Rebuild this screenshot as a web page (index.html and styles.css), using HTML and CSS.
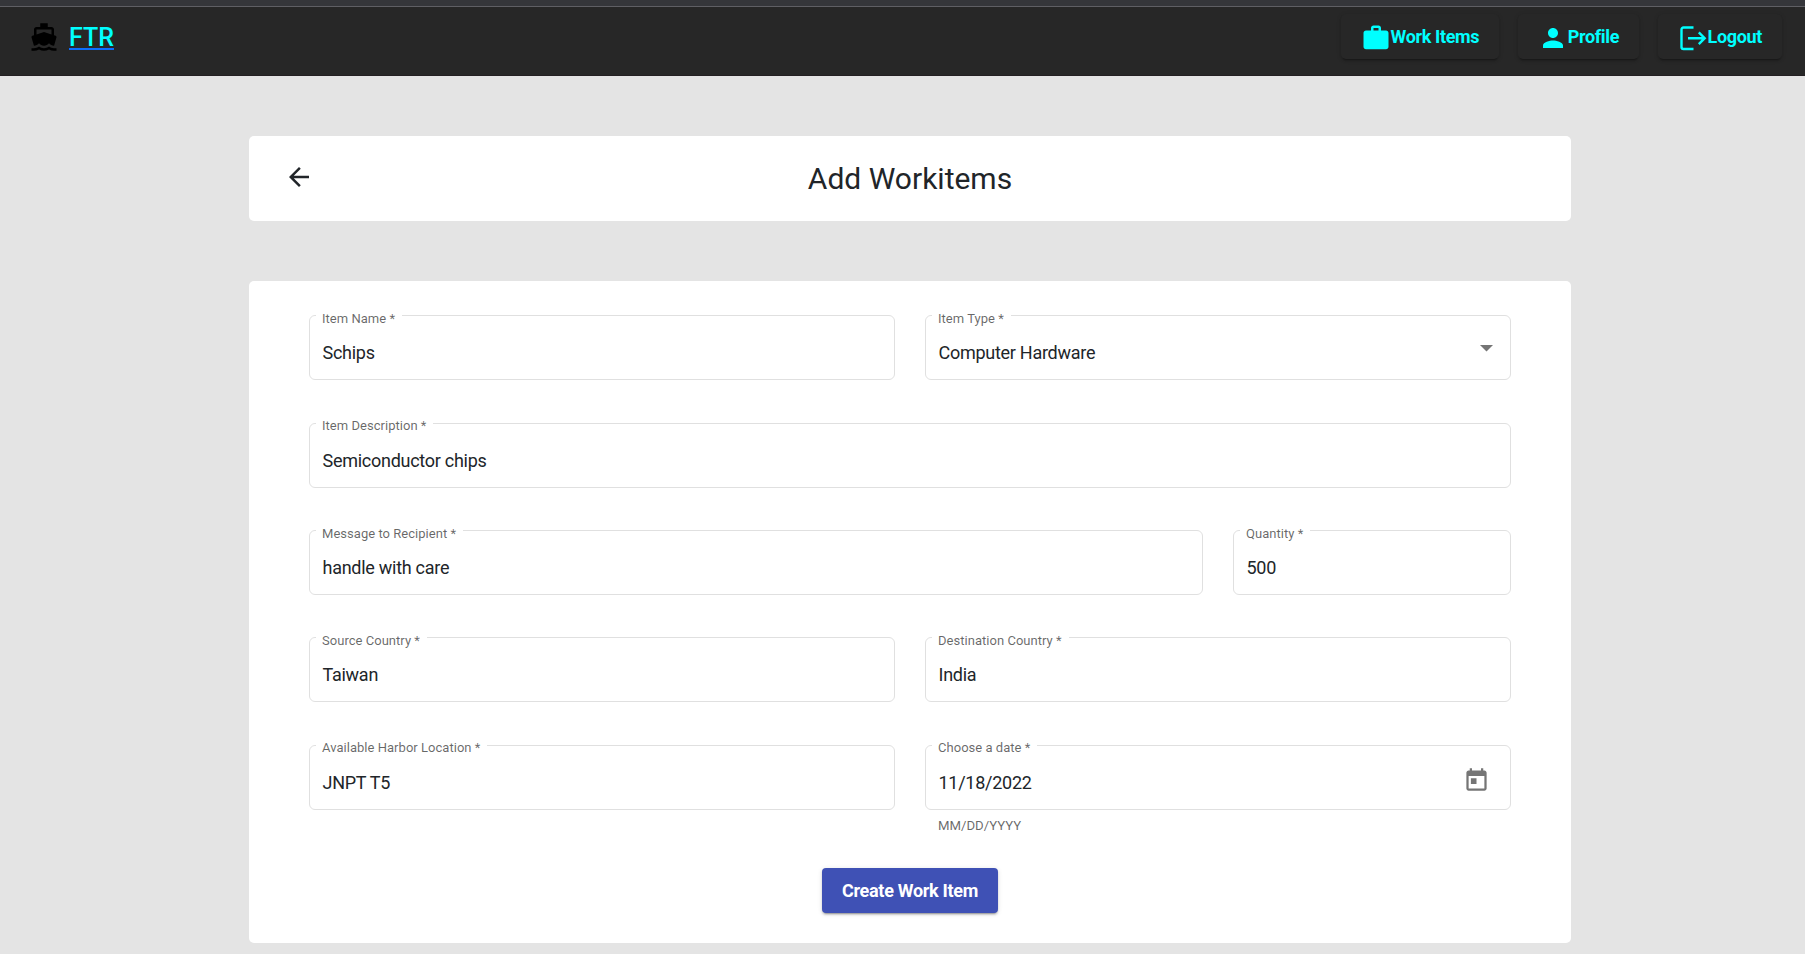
FILE: index.html
```html
<!DOCTYPE html>
<html lang="en">
<head>
<meta charset="utf-8">
<title>FTR - Add Workitems</title>
<link rel="stylesheet" href="styles.css">
</head>
<body>
<div class="top-strip"></div>
<header class="navbar">
  <div class="brand">
    <svg class="icon" viewBox="0 0 24 24"><path d="M20 21c-1.39 0-2.78-.47-4-1.32-2.44 1.71-5.56 1.71-8 0C6.78 20.53 5.39 21 4 21H2v2h2c1.38 0 2.74-.35 4-.99 2.52 1.29 5.48 1.29 8 0 1.26.65 2.62.99 4 .99h2v-2h-2zM3.95 19H4c1.6 0 3.02-.88 4-2 .98 1.12 2.4 2 4 2s3.02-.88 4-2c.98 1.12 2.4 2 4 2h.05l1.89-6.68c.08-.26.06-.54-.06-.78s-.34-.42-.6-.5L20 10.620V6c0-1.1-.9-2-2-2h-3V1H9v3H6c-1.100 0-2 .9-2 2v4.620l-1.290.42c-.26.08-.48.26-.6.5s-.15.52-.06.78L3.950 19zM6 6h12v3.970L12 8 6 9.970V6z"/></svg>
    <a class="brand-name">FTR</a>
  </div>
  <nav class="nav-links">
    <button class="nav-button"><svg class="icon" viewBox="0 0 24 24"><path d="M20 6h-4V4c0-1.110-.89-2-2-2h-4c-1.110 0-2 .89-2 2v2H4c-1.110 0-1.990.89-1.990 2L2 19c0 1.110.89 2 2 2h16c1.110 0 2-.89 2-2V8c0-1.110-.89-2-2-2zm-6 0h-4V4h4v2z"/></svg><span class="nav-text">Work Items</span></button>
    <button class="nav-button"><svg class="icon" viewBox="0 0 24 24"><path d="M12 12c2.210 0 4-1.790 4-4s-1.790-4-4-4-4 1.790-4 4 1.790 4 4 4zm0 2c-2.670 0-8 1.340-8 4v2h16v-2c0-2.660-5.330-4-8-4z"/></svg><span class="nav-text">Profile</span></button>
    <button class="nav-button"><svg class="icon stroked" viewBox="0 0 30 30"><path d="M15.500 4.500H5.500a2 2 0 0 0-2 2V24a2 2 0 0 0 2 2H15.500M10 15.200H26.500M20.800 9.300L26.700 15.200L20.800 21.100"/></svg><span class="nav-text">Logout</span></button>
  </nav>
</header>
<main class="page">
  <section class="card title-card">
    <svg class="back" viewBox="0 0 24 24"><path d="M20 11H7.830l5.590-5.590L12 4l-8 8 8 8 1.410-1.410L7.830 13H20v-2z"/></svg>
    <h1 class="title">Add Workitems</h1>
  </section>
  <section class="card form-card">
    <form class="form">
      <div class="row halves">
        <fieldset class="field"><legend>Item Name *</legend><div class="value">Schips</div></fieldset>
        <fieldset class="field"><legend>Item Type *</legend><div class="value">Computer Hardware</div><svg class="caret" viewBox="0 0 14 7"><path d="M0 0H13L6.500 6.500z"/></svg></fieldset>
      </div>
      <div class="row raised">
        <fieldset class="field"><legend>Item Description *</legend><div class="value">Semiconductor chips</div></fieldset>
      </div>
      <div class="row message-row">
        <fieldset class="field"><legend>Message to Recipient *</legend><div class="value">handle with care</div></fieldset>
        <fieldset class="field"><legend>Quantity *</legend><div class="value">500</div></fieldset>
      </div>
      <div class="row halves">
        <fieldset class="field"><legend>Source Country *</legend><div class="value">Taiwan</div></fieldset>
        <fieldset class="field"><legend>Destination Country *</legend><div class="value">India</div></fieldset>
      </div>
      <div class="row halves raised">
        <fieldset class="field"><legend>Available Harbor Location *</legend><div class="value">JNPT T5</div></fieldset>
        <fieldset class="field"><legend>Choose a date *</legend><div class="value">11/18/2022</div><svg class="calendar" viewBox="0 0 24 24"><path d="M19 3h-1V1h-2v2H8V1H6v2H5c-1.110 0-1.990.9-1.990 2L3 19c0 1.100.89 2 2 2h14c1.100 0 2-.9 2-2V5c0-1.100-.9-2-2-2zm0 16H5V8h14v11zM7 10h5v5H7z"/></svg></fieldset>
      </div>
      <div class="row halves hints"><span></span><span class="hint">MM/DD/YYYY</span></div>
      <button class="submit" type="button">Create Work Item</button>
    </form>
  </section>
</main>
</body>
</html>
```
FILE: styles.css
```css
* {
  box-sizing: border-box;
}

body {
  margin: 0;
  height: 954px;
  overflow: hidden;
  background: #e4e4e4;
  color: #212529;
  font-family: Roboto, "Liberation Sans", sans-serif;
  font-size: 18px;
}

button {
  font: inherit;
  border: 0;
}

.top-strip {
  height: 7px;
  background: #35363a;
  border-bottom: 1px solid #5f5f64;
}

.navbar {
  display: flex;
  justify-content: space-between;
  align-items: flex-start;
  height: 69px;
  padding: 7px 23px 0 29px;
  background: #272727;
  border-bottom: 1px solid #231f22;
}

.icon {
  width: 30px;
  height: 30px;
  fill: currentColor;
  flex: none;
}

.stroked {
  fill: none;
  stroke: currentColor;
  stroke-width: 2.4;
}

.brand {
  display: flex;
  gap: 10px;
  padding-top: 8px;
  color: #000;
}

.brand-name {
  padding-top: 1px;
  color: #0ff;
  font-size: 25px;
  font-weight: 500;
  line-height: 29px;
  text-decoration: underline #0d6efd 2px;
  text-underline-offset: 2px;
}

.nav-links {
  display: flex;
  gap: 18.5px;
}

.nav-button {
  display: flex;
  align-items: center;
  height: 45px;
  padding: 2px 20px 0;
  border-radius: 5px;
  background: #272727;
  color: #0ff;
  font-weight: 700;
  letter-spacing: -.35px;
  box-shadow: 0 3px 1px -2px rgba(0, 0, 0, .2), 0 2px 2px rgba(0, 0, 0, .14), 0 1px 5px rgba(0, 0, 0, .12);
}

.nav-text {
  padding-bottom: 2px;
}

.page {
  display: flex;
  flex-direction: column;
  gap: 60px;
  width: 1322px;
  margin: 60px 0 0 249px;
}

.card {
  background: #fff;
  border-radius: 5px;
}

.title-card {
  display: grid;
  grid-template-columns: 30px 1fr 30px;
  align-items: center;
  height: 85px;
  padding: 0 35px;
}

.back {
  width: 30px;
  height: 30px;
  fill: #212529;
  margin-top: -4px;
}

.title {
  margin: 0;
  font-size: 30px;
  font-weight: 400;
  line-height: 36px;
  text-align: center;
}

.form-card {
  height: 662px;
  padding: 23px 60px 0;
}

.form {
  display: flex;
  flex-direction: column;
}

.row {
  display: grid;
  gap: 30px;
  height: 107px;
  align-items: start;
}

.row:first-child {
  height: 108px;
}

.row:nth-child(4) {
  height: 108px;
}

.halves {
  grid-template-columns: 1fr 1fr;
}

.message-row {
  grid-template-columns: 894px 1fr;
}

.field {
  display: flex;
  justify-content: space-between;
  min-width: 0;
  height: 76px;
  margin: 0;
  padding: 0 16px 0 6px;
  border: 1px solid #e0e0e0;
  border-radius: 6px;
}

legend {
  padding: 7px 7px 0 6px;
  color: rgba(0, 0, 0, .6);
  font-size: 13px;
  letter-spacing: .03px;
  line-height: 16px;
  white-space: nowrap;
}

.raised legend {
  padding-top: 6px;
  padding-bottom: 1px;
}

.value {
  padding: 16px 0 0 6.5px;
  letter-spacing: -.27px;
  line-height: 20px;
}

.caret {
  width: 14px;
  height: 7px;
  margin-top: 18px;
  fill: #757575;
}

.calendar {
  width: 27px;
  height: 27px;
  margin: 10px 4px 0 0;
  fill: #757575;
}

.row.hints {
  height: 30px;
  margin-top: -23px;
}

.hint {
  padding-left: 13px;
  color: rgba(0, 0, 0, .6);
  font-size: 13.2px;
  line-height: 16px;
}

.submit {
  align-self: center;
  width: 176px;
  height: 45px;
  margin-top: 20px;
  padding: 0;
  border-radius: 4px;
  background: #3f51b5;
  color: #fff;
  font-weight: 700;
  letter-spacing: -.3px;
  box-shadow: 0 3px 1px -2px rgba(0, 0, 0, .2), 0 2px 2px rgba(0, 0, 0, .14), 0 1px 5px rgba(0, 0, 0, .12);
}
```
